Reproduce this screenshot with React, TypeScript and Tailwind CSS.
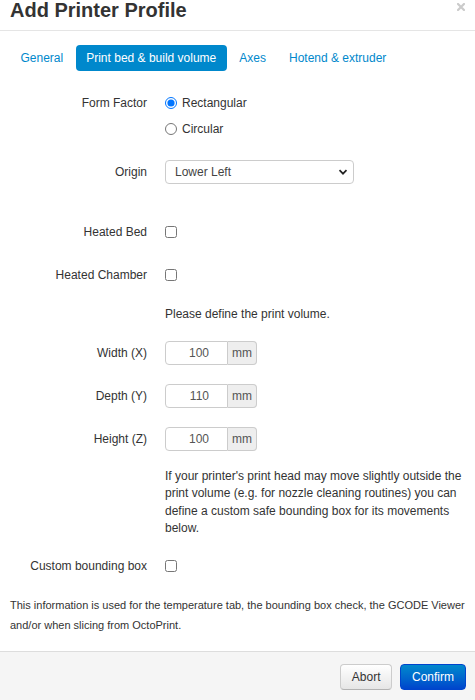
import React from 'react'

const tabs = ['General', 'Print bed & build volume', 'Axes', 'Hotend & extruder']

type RowProps = {
  label?: string
  className?: string
  children?: React.ReactNode
}

const Row = ({ label, className = '', children }: RowProps) => (
  <div className={`flex ${className}`}>
    <div className="w-[147px] shrink-0 text-right leading-[24px]">{label}</div>
    <div className="ml-[18px] flex-1">{children}</div>
  </div>
)

const Check = () => (
  <div className="flex h-[24px] items-center">
    <input type="checkbox" readOnly className="m-0 h-[12px] w-[12px]" />
  </div>
)

const MmInput = ({ value }: { value: string }) => (
  <div className="flex h-[24px]">
    <input
      type="text"
      readOnly
      value={value}
      className="h-[24px] w-[63px] rounded-l-[4px] border border-[#ccc] pr-[18px] text-right text-[12px] text-[#555] outline-none"
    />
    <span className="flex h-[24px] w-[29px] items-center justify-center rounded-r-[4px] border border-l-0 border-[#ccc] bg-[#eee] text-[12px] text-[#555]">
      mm
    </span>
  </div>
)

export default function App() {
  return (
    <div className="h-[700px] w-[475px] overflow-hidden bg-white font-['Liberation_Sans',Arial,sans-serif] text-[12px] text-[#333]">
      {/* header */}
      <div className="relative h-[31px] border-b border-[#e5e5e5] px-[10px]">
        <h3 className="text-[20px] font-bold leading-[20px] text-[#333]">Add Printer Profile</h3>
        {/* close button */}
        <svg className="absolute left-[457px] top-[3px] opacity-20" width="8" height="8" viewBox="0 0 8 8">
          <path d="M1 1 L7 7 M7 1 L1 7" stroke="#000" strokeWidth="2.2" strokeLinecap="square" />
        </svg>
      </div>

      {/* tabs */}
      <div className="mt-[14px] flex gap-[2px] px-[10px]">
        {tabs.map((t, i) => (
          <div
            key={t}
            className={
              i === 1
                ? 'rounded-[4px] bg-[#0088cc] px-[10.5px] py-[4px] leading-[18px] text-white'
                : 'rounded-[4px] px-[10.5px] py-[4px] leading-[18px] text-[#0088cc]'
            }
          >
            {t}
          </div>
        ))}
      </div>

      {/* form */}
      <Row label="Form Factor" className="mt-[19px] [&>div:first-child]:leading-[26px]">
        <label className="flex h-[26px] items-center gap-[5px]">
          <input type="radio" name="ff" defaultChecked className="m-0 h-[12px] w-[12px]" />
          Rectangular
        </label>
        <label className="flex h-[26px] items-center gap-[5px]">
          <input type="radio" name="ff" className="m-0 h-[12px] w-[12px]" />
          Circular
        </label>
      </Row>

      <Row label="Origin" className="mt-[18px]">
        <div className="flex h-[24px] w-[189px] items-center justify-between rounded-[4px] border border-[#ccc] pl-[9px] pr-[5px] text-[#444]">
          <span>Lower Left</span>
          <svg width="10" height="10" viewBox="0 0 10 10">
            <path d="M1.5 3.2 L5 6.7 L8.5 3.2" fill="none" stroke="#222" strokeWidth="1.7" />
          </svg>
        </div>
      </Row>

      <Row label="Heated Bed" className="mt-[36px]">
        <Check />
      </Row>

      <Row label="Heated Chamber" className="mt-[19px]">
        <Check />
      </Row>

      <Row className="mt-[15px]">
        <div className="leading-[24px]">Please define the print volume.</div>
      </Row>

      <Row label="Width (X)" className="mt-[15px]">
        <MmInput value="100" />
      </Row>
      <Row label="Depth (Y)" className="mt-[19px]">
        <MmInput value="110" />
      </Row>
      <Row label="Height (Z)" className="mt-[19px]">
        <MmInput value="100" />
      </Row>

      <Row className="mt-[17px]">
        <p className="w-[300px] leading-[17.33px]">
          If your printer's print head may move slightly outside the print volume (e.g. for nozzle cleaning routines) you can
          define a custom safe bounding box for its movements below.
        </p>
      </Row>

      <Row label="Custom bounding box" className="mt-[17px]">
        <Check />
      </Row>

      <p className="mt-[17px] px-[10px] text-[11px] leading-[20px]">
        This information is used for the temperature tab, the bounding box check, the GCODE Viewer and/or when slicing from
        OctoPrint.
      </p>

      {/* footer */}
      <div className="mt-[16px] flex h-[60px] justify-end gap-[8px] border-t border-[#ddd] bg-[#f5f5f5] pr-[9px] pt-[12px]">
        <button className="h-[26px] rounded-[4px] border border-[#ccc] border-b-[#b3b3b3] bg-gradient-to-b from-white to-[#e6e6e6] px-[10.5px] text-[12px] text-[#333]">
          Abort
        </button>
        <button className="h-[26px] rounded-[4px] border border-[#04c] bg-gradient-to-b from-[#0088cc] to-[#0044cc] px-[11px] text-[12px] text-white">
          Confirm
        </button>
      </div>
    </div>
  )
}
